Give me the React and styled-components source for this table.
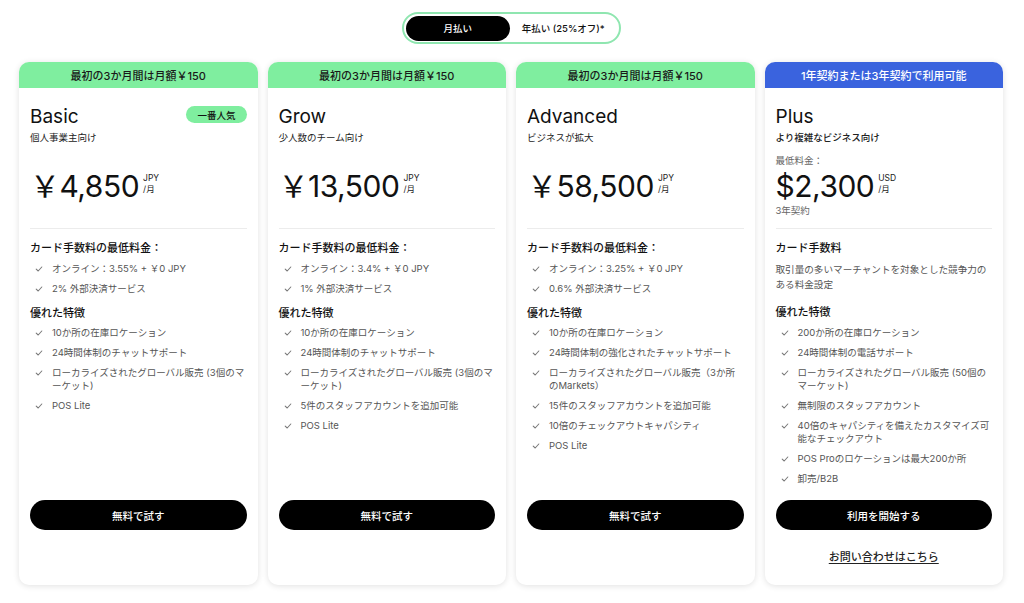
import React, { useState } from 'react'
import styled, { createGlobalStyle } from 'styled-components'

const GlobalStyle = createGlobalStyle`
    body {
        margin: 0;
        background: #ffffff;
        font-family: Inter, "Noto Sans CJK JP", sans-serif;
        color: #111;
    }
`

const Page = styled.div`
    width: 1024px;
    height: 603px;
    box-sizing: border-box;
    padding: 12px 21px 0 19px;
    display: flex;
    flex-direction: column;
    align-items: center;
`

const Toggle = styled.div`
    display: flex;
    align-items: center;
    width: 219px;
    height: 32px;
    box-sizing: border-box;
    border: 2px solid #8fe6b0;
    border-radius: 16px;
    padding: 2px;
    margin-bottom: 18px;
`

const ToggleOption = styled.button`
    border: none;
    height: 25px;
    border-radius: 13px;
    font-family: inherit;
    font-size: 9.5px;
    font-weight: 500;
    cursor: pointer;
    padding: 0;
    width: ${p => p.$wide ? '108px' : '106px'};
    background: ${p => p.$active ? '#000' : 'transparent'};
    color: ${p => p.$active ? '#fff' : '#111'};
`

const Grid = styled.div`
    align-self: stretch;
    display: grid;
    grid-template-columns: repeat(4, 1fr);
    gap: 10px;
`

const Card = styled.div`
    height: 523px;
    background: #fff;
    border-radius: 10px;
    box-shadow: 0 1px 6px rgba(0, 0, 0, 0.12);
    overflow: hidden;
    display: flex;
    flex-direction: column;
`

const Banner = styled.div`
    height: 26px;
    display: flex;
    align-items: center;
    justify-content: center;
    font-size: 11px;
    font-weight: 500;
    background: ${p => p.$blue ? '#3a63de' : '#7fee9f'};
    color: ${p => p.$blue ? '#fff' : '#1a1a1a'};
`

const Body = styled.div`
    flex: 1;
    display: flex;
    flex-direction: column;
    padding: 17px 11px 0 11px;
`

const TitleRow = styled.div`
    display: flex;
    justify-content: space-between;
    align-items: flex-start;
`

const Title = styled.div`
    font-size: 19px;
    line-height: 24px;
    font-weight: 400;
`

const Badge = styled.div`
    background: #7fee9f;
    border-radius: 9px;
    font-size: 9.5px;
    font-weight: 500;
    height: 17px;
    padding: 0 11px;
    display: flex;
    align-items: center;
    margin-top: 1px;
`

const Subtitle = styled.div`
    font-size: 9.5px;
    line-height: 14px;
    margin-top: 2px;
    color: #222;
    font-weight: ${p => p.$bold ? 500 : 400};
`

const PriceBlock = styled.div`
    height: 76px;
    display: flex;
    flex-direction: column;
    justify-content: center;
    border-bottom: 1px solid #ececec;
    padding-bottom: 4px;
    margin-top: 3px;
    margin-bottom: 11px;
`

const Small = styled.div`
    font-size: 9.5px;
    color: #666;
    line-height: 14px;
`

const PriceRow = styled.div`
    display: flex;
    align-items: center;
    gap: 4px;
`

const Amount = styled.div`
    font-size: 30px;
    line-height: 36px;
    letter-spacing: -0.5px;
`

const Unit = styled.div`
    display: flex;
    flex-direction: column;
    font-size: 8.5px;
    line-height: 11px;
    color: #222;
    margin-top: -4px;
`

const Heading = styled.div`
    font-size: 11px;
    font-weight: 500;
    line-height: 16px;
    margin-bottom: 5.5px;
    margin-top: ${p => p.$gap}px;
`

const Note = styled.div`
    font-size: 9.6px;
    line-height: 15px;
    color: #555;
`

const List = styled.ul`
    list-style: none;
    margin: 0;
    padding: 0;
    display: flex;
    flex-direction: column;
    gap: 7px;
`

const Item = styled.li`
    display: flex;
    gap: 9px;
    font-size: 9.5px;
    line-height: 13px;
    color: #555;
    padding-left: 5px;
`

const Check = styled.svg`
    flex: none;
    width: 8px;
    height: 8px;
    margin-top: 3px;
`

const Spacer = styled.div`
    flex: 1;
`

const Footer = styled.div`
    height: 85px;
    display: flex;
    flex-direction: column;
    align-items: center;
`

const Button = styled.button`
    width: 100%;
    height: 30px;
    border: none;
    border-radius: 15px;
    background: #000;
    color: #fff;
    font-family: inherit;
    font-size: 10.5px;
    font-weight: 500;
    cursor: pointer;
`

const Link = styled.a`
    margin-top: 18px;
    font-size: 11px;
    font-weight: 500;
    color: #222;
    text-decoration: underline;
    text-underline-offset: 2px;
`

const CheckIcon = () => (
    <Check viewBox="0 0 10 10">
        <path d="M1.5 5.2 L4 7.5 L8.5 2.5" fill="none" stroke="#777" strokeWidth="1.3" strokeLinecap="round" strokeLinejoin="round" />
    </Check>
)

const plans = [
    {
        banner: '最初の3か月間は月額￥150',
        name: 'Basic',
        badge: '一番人気',
        sub: '個人事業主向け',
        price: '￥4,850',
        currency: 'JPY',
        fees: ['オンライン：3.55% + ￥0 JPY', '2% 外部決済サービス'],
        features: ['10か所の在庫ロケーション', '24時間体制のチャットサポート', 'ローカライズされたグローバル販売 (3個のマーケット)', 'POS Lite'],
        cta: '無料で試す',
    },
    {
        banner: '最初の3か月間は月額￥150',
        name: 'Grow',
        sub: '少人数のチーム向け',
        price: '￥13,500',
        currency: 'JPY',
        fees: ['オンライン：3.4% + ￥0 JPY', '1% 外部決済サービス'],
        features: ['10か所の在庫ロケーション', '24時間体制のチャットサポート', 'ローカライズされたグローバル販売 (3個のマーケット)', '5件のスタッフアカウントを追加可能', 'POS Lite'],
        cta: '無料で試す',
    },
    {
        banner: '最初の3か月間は月額￥150',
        name: 'Advanced',
        sub: 'ビジネスが拡大',
        price: '￥58,500',
        currency: 'JPY',
        fees: ['オンライン：3.25% + ￥0 JPY', '0.6% 外部決済サービス'],
        features: ['10か所の在庫ロケーション', '24時間体制の強化されたチャットサポート', 'ローカライズされたグローバル販売（3か所のMarkets）', '15件のスタッフアカウントを追加可能', '10倍のチェックアウトキャパシティ', 'POS Lite'],
        cta: '無料で試す',
    },
    {
        banner: '1年契約または3年契約で利用可能',
        blue: true,
        name: 'Plus',
        sub: 'より複雑なビジネス向け',
        boldSub: true,
        pre: '最低料金：',
        price: '$2,300',
        currency: 'USD',
        post: '3年契約',
        feeTitle: 'カード手数料',
        note: '取引量の多いマーチャントを対象とした競争力のある料金設定',
        features: ['200か所の在庫ロケーション', '24時間体制の電話サポート', 'ローカライズされたグローバル販売 (50個のマーケット)', '無制限のスタッフアカウント', '40倍のキャパシティを備えたカスタマイズ可能なチェックアウト', 'POS Proのロケーションは最大200か所', '卸売/B2B'],
        cta: '利用を開始する',
        link: 'お問い合わせはこちら',
    },
]

const PlanCard = ({ plan }) => (
    <Card>
        <Banner $blue={plan.blue}>{plan.banner}</Banner>
        <Body>
            <TitleRow>
                <Title>{plan.name}</Title>
                {plan.badge && <Badge>{plan.badge}</Badge>}
            </TitleRow>
            <Subtitle $bold={plan.boldSub}>{plan.sub}</Subtitle>
            <PriceBlock>
                {plan.pre && <Small>{plan.pre}</Small>}
                <PriceRow>
                    <Amount>{plan.price}</Amount>
                    <Unit>
                        <span>{plan.currency}</span>
                        <span>/月</span>
                    </Unit>
                </PriceRow>
                {plan.post && <Small>{plan.post}</Small>}
            </PriceBlock>
            <Heading $gap={0}>{plan.feeTitle || 'カード手数料の最低料金：'}</Heading>
            {plan.note ? (
                <Note>{plan.note}</Note>
            ) : (
                <List>
                    {plan.fees.map(f => (
                        <Item key={f}><CheckIcon />{f}</Item>
                    ))}
                </List>
            )}
            <Heading $gap={plan.note ? 12.5 : 10}>優れた特徴</Heading>
            <List>
                {plan.features.map(f => (
                    <Item key={f}><CheckIcon />{f}</Item>
                ))}
            </List>
            <Spacer />
            <Footer>
                <Button>{plan.cta}</Button>
                {plan.link && <Link href="#">{plan.link}</Link>}
            </Footer>
        </Body>
    </Card>
)

const App = () => {
    const [yearly, setYearly] = useState(false)

    return (
        <Page>
            <GlobalStyle />
            <Toggle>
                <ToggleOption $active={!yearly} onClick={() => setYearly(false)}>月払い</ToggleOption>
                <ToggleOption $active={yearly} $wide onClick={() => setYearly(true)}>年払い (25%オフ)*</ToggleOption>
            </Toggle>
            <Grid>
                {plans.map(p => <PlanCard key={p.name} plan={p} />)}
            </Grid>
        </Page>
    )
}

export default App
